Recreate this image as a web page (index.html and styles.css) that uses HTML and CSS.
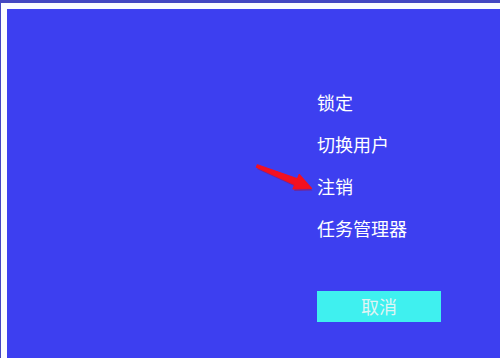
FILE: index.html
```html
<!DOCTYPE html>
<html>
<head>
<meta charset="utf-8">
<link rel="stylesheet" href="styles.css">
</head>
<body>
<div class="frame">
  <div class="screen">
    <div class="menu">
      <div class="item">锁定</div>
      <div class="item">切换用户</div>
      <div class="item target">注销
        <svg class="arrow" width="62" height="34" viewBox="0 0 62 34">
          <path d="M3.4 3.8 L43.5 17.8 L45.2 13.5 L57.5 27.5 L39 28 L40.8 23.8 L2.4 6.2 Z" fill="#a01048" opacity="0.5" transform="translate(1,2)"/>
          <path d="M3.4 3.8 L43.5 17.8 L45.2 13.5 L57.5 27.5 L39 28 L40.8 23.8 L2.4 6.2 Z" fill="#f41020" stroke="#f41020" stroke-width="1.2" stroke-linejoin="round"/>
        </svg>
      </div>
      <div class="item">任务管理器</div>
    </div>
    <div class="cancel">取消</div>
  </div>
</div>
</body>
</html>
```
FILE: styles.css
```css
html, body {
  margin: 0;
  padding: 0;
  width: 500px;
  height: 358px;
  overflow: hidden;
  background: #4446c2;
}
.frame {
  box-sizing: border-box;
  width: 500px;
  height: 358px;
  padding: 3px 0 0 1px;
}
.screen {
  box-sizing: border-box;
  width: 499px;
  height: 355px;
  background: #3d3ff0;
  border-top: 6px solid #fbfbff;
  border-left: 6px solid #fbfbff;
  padding: 80px 0 0 310px;
  font-family: "Noto Sans CJK SC", "Noto Sans", sans-serif;
  color: #ffffff;
}
.menu {
  display: flex;
  flex-direction: column;
  gap: 16px;
}
.item {
  font-size: 18px;
  line-height: 26px;
  position: relative;
}
.arrow {
  position: absolute;
  left: -63px;
  top: -12px;
}
.cancel {
  margin-top: 50px;
  width: 124px;
  height: 31px;
  background: #3ff0ef;
  color: #dff4f4;
  font-size: 18px;
  line-height: 31px;
  text-align: center;
}
```
